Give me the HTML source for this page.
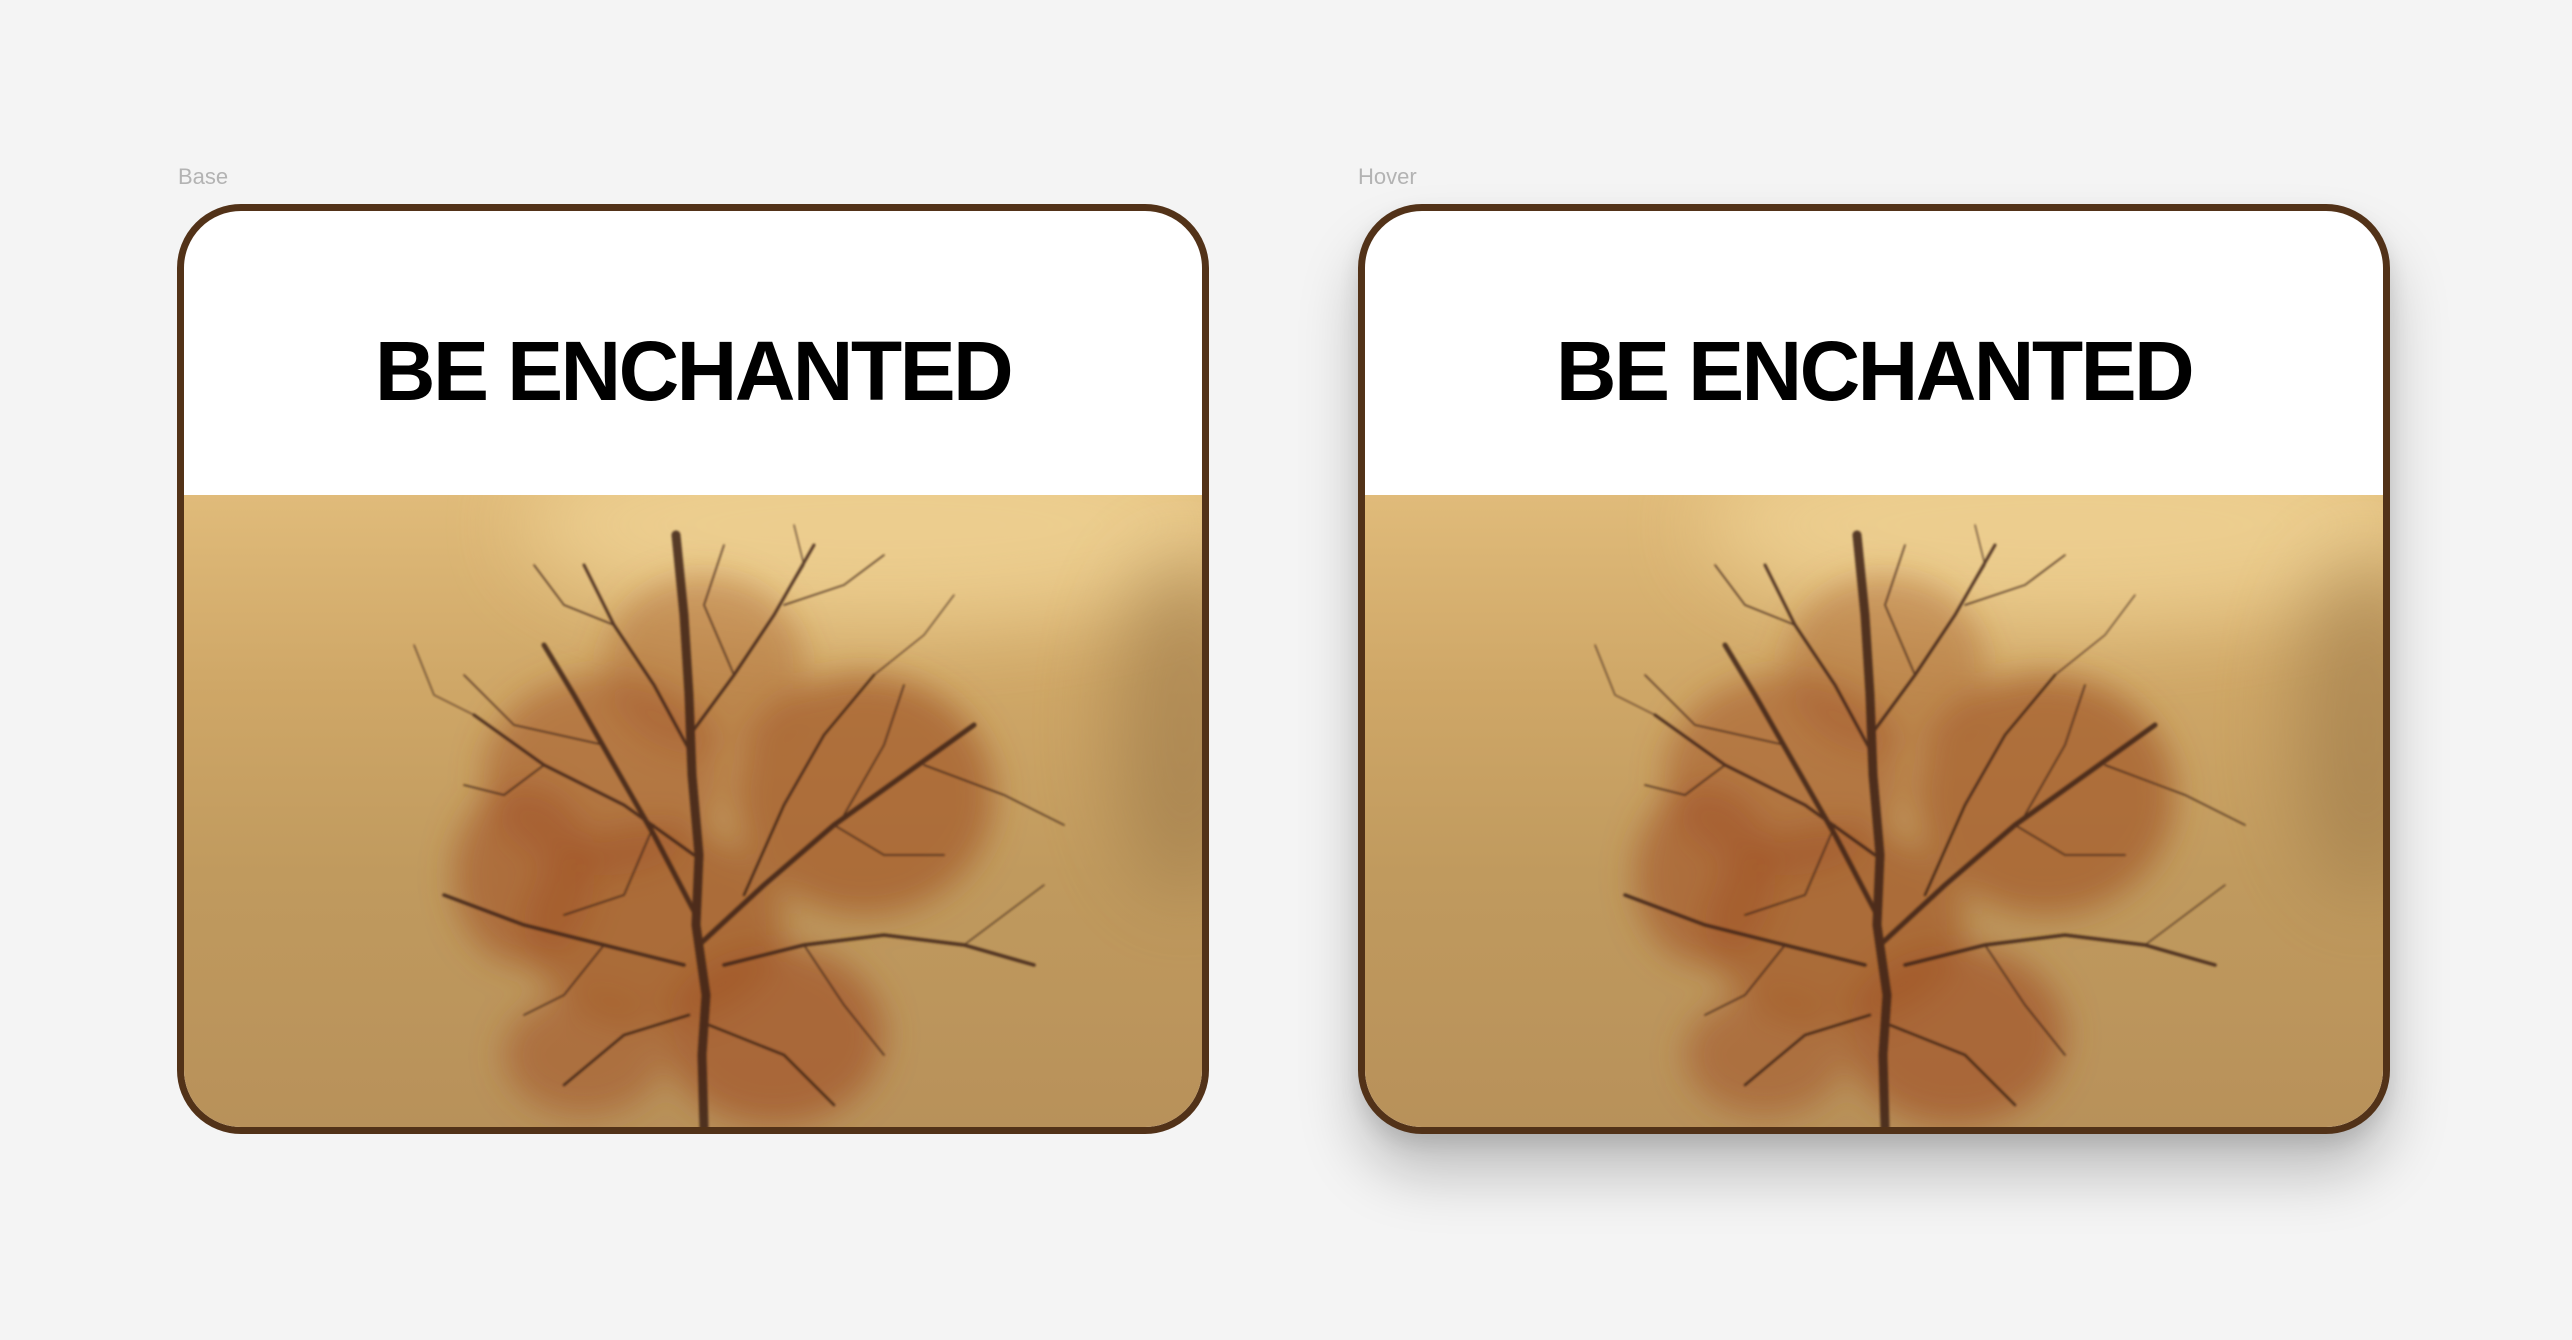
<!DOCTYPE html>
<html><head><meta charset="utf-8"><style>
html,body{margin:0;padding:0}
body{width:2572px;height:1340px;background:#f4f4f4;position:relative;overflow:hidden;font-family:"Liberation Sans",Arial,sans-serif}
.lbl{position:absolute;top:164px;font-size:22px;color:#b3b3b3}
.card{position:absolute;top:204px;width:1018px;height:916px;border:7px solid #523218;border-radius:64px;overflow:hidden;background:#fff}
.hd{height:284px;display:flex;align-items:center;justify-content:center;font-weight:bold;font-size:84px;letter-spacing:-2.6px;color:#000;padding-top:36px;box-sizing:border-box}
.img{height:632px;position:relative;background:linear-gradient(180deg,#e0bb7a 0%,#cfa767 30%,#c09a5e 60%,#b8915a 100%)}
.img svg{position:absolute;left:0;top:0}
.hover{box-shadow:0 40px 60px rgba(0,0,0,.22),0 10px 20px rgba(0,0,0,.1)}
</style></head><body>
<div class="lbl" style="left:178px">Base</div>
<div class="lbl" style="left:1358px">Hover</div>

<div class="card" style="left:177px">
<div class="hd">BE ENCHANTED</div>
<div class="img">
<svg width="1018" height="632" viewBox="0 0 1018 632">
<defs>
<filter id="b1" filterUnits="userSpaceOnUse" x="-200" y="-200" width="1400" height="1100"><feGaussianBlur stdDeviation="40"/></filter>
<filter id="b2" filterUnits="userSpaceOnUse" x="-200" y="-200" width="1400" height="1100"><feGaussianBlur stdDeviation="16"/></filter>
<filter id="b3" filterUnits="userSpaceOnUse" x="-200" y="-200" width="1400" height="1100"><feGaussianBlur stdDeviation="1"/></filter>
<g id="tree">
<ellipse cx="700" cy="30" rx="360" ry="100" fill="#f0d394" opacity=".8" filter="url(#b1)"/>
<ellipse cx="1000" cy="230" rx="70" ry="170" fill="#8c6a40" opacity=".45" filter="url(#b1)"/>
<g filter="url(#b2)" fill="#a3582b">
<ellipse cx="520" cy="170" rx="100" ry="90" opacity=".4"/>
<ellipse cx="420" cy="280" rx="120" ry="100" opacity=".55"/>
<ellipse cx="680" cy="300" rx="130" ry="120" opacity=".7"/>
<ellipse cx="340" cy="380" rx="70" ry="90" opacity=".65"/>
<ellipse cx="470" cy="430" rx="130" ry="100" opacity=".7"/>
<ellipse cx="590" cy="540" rx="110" ry="90" opacity=".75"/>
<ellipse cx="400" cy="560" rx="80" ry="60" opacity=".6"/>
</g>
<g stroke="#3e2414" fill="none" stroke-linecap="round" filter="url(#b3)" opacity=".85">
<path d="M520 632 L518 560 L522 500 L512 430 L515 360 L508 280 L505 200 L500 120 L492 40" stroke-width="9"/>
<path d="M512 420 L470 340 L430 270 L390 200 L360 150" stroke-width="5"/>
<path d="M510 360 L440 310 L360 270 L290 220" stroke-width="3"/>
<path d="M515 450 L580 390 L650 330 L720 280 L790 230" stroke-width="5"/>
<path d="M540 470 L620 450 L700 440 L780 450 L850 470" stroke-width="3.5"/>
<path d="M508 260 L470 190 L430 130 L400 70" stroke-width="3"/>
<path d="M506 240 L550 180 L590 120 L630 50" stroke-width="3"/>
<path d="M560 400 L600 310 L640 240 L690 180" stroke-width="2.5"/>
<path d="M500 470 L420 450 L340 430 L260 400" stroke-width="3.5"/>
<path d="M505 520 L440 540 L380 590" stroke-width="2.5"/>
<path d="M525 530 L600 560 L650 610" stroke-width="2.5"/>
<path d="M470 330 L440 400 L380 420" stroke-width="1.5"/>
<path d="M660 320 L700 250 L720 190" stroke-width="1.5"/>
<path d="M420 250 L330 230 L280 180" stroke-width="1.5"/>
<path d="M740 270 L820 300 L880 330" stroke-width="1.5"/>
<path d="M600 110 L660 90 L700 60" stroke-width="1.5"/>
<path d="M430 130 L380 110 L350 70" stroke-width="1.5"/>
<path d="M650 330 L700 360 L760 360" stroke-width="1.5"/>
<path d="M360 270 L320 300 L280 290" stroke-width="1.5"/>
<path d="M550 180 L520 110 L540 50" stroke-width="1.5"/>
<path d="M620 450 L660 510 L700 560" stroke-width="1.5"/>
<path d="M420 450 L380 500 L340 520" stroke-width="1.5"/>
<path d="M590 120 L620 70 L610 30" stroke-width="1.2"/>
<path d="M690 180 L740 140 L770 100" stroke-width="1.2"/>
<path d="M290 220 L250 200 L230 150" stroke-width="1.2"/>
<path d="M780 450 L820 420 L860 390" stroke-width="1.2"/>
</g>
</g>
</defs>
<use href="#tree"/>
</svg>
</div>
</div>

<div class="card hover" style="left:1358px">
<div class="hd">BE ENCHANTED</div>
<div class="img">
<svg width="1018" height="632" viewBox="0 0 1018 632"><use href="#tree"/></svg>
</div>
</div>
</body></html>
